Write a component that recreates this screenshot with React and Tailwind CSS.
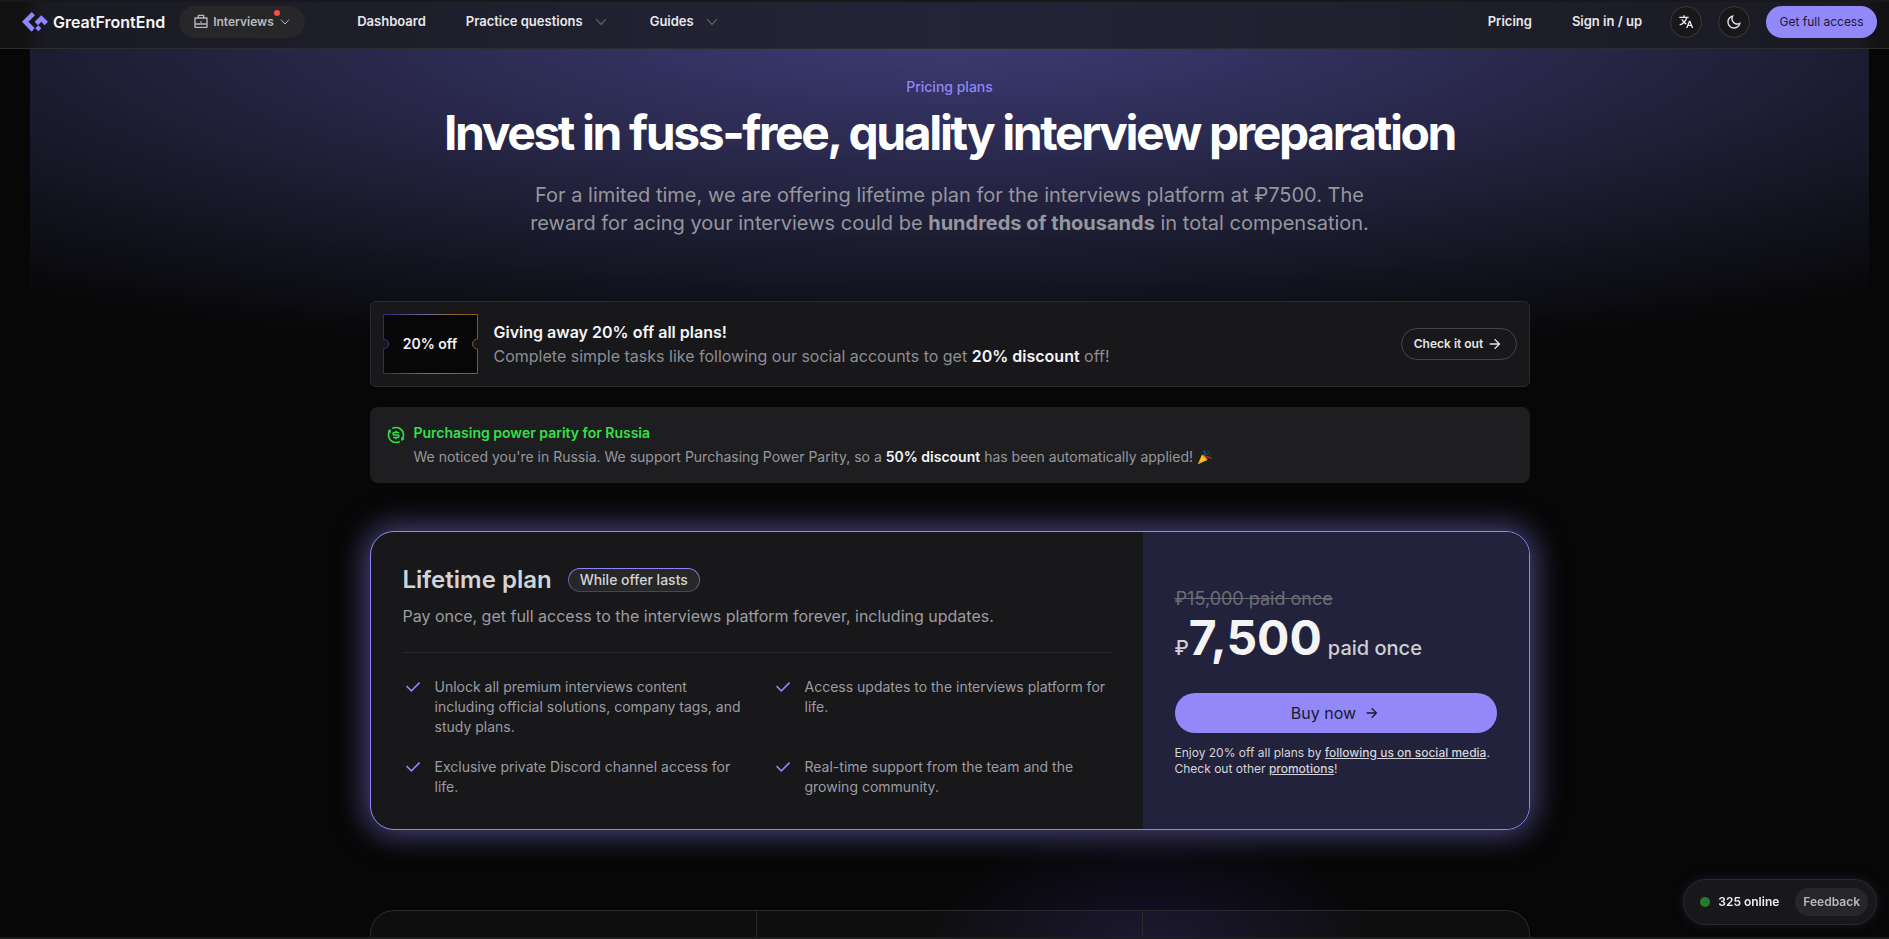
import React from "react";
import {
  RiArrowRightLine,
  RiBriefcaseLine,
  RiCheckLine,
  RiExchangeDollarLine,
  RiMoonLine,
  RiTranslate2,
} from "react-icons/ri";

function LogoMark() {
  return (
    <svg viewBox="0 0 78 60" className="h-5 w-[26px] shrink-0" fill="#8e86fa" aria-hidden="true">
      <path d="M29 0 L39 10 L19.500 29.500 L38 48 L29 59 L0 29.500 Z" />
      <path d="M58 10 L78 29.500 L68 39.500 L58 29.500 L48 39.500 L38 29.500 Z" />
      <path d="M49 40 L58 49 L49 58 L40 49 Z" />
    </svg>
  );
}

function Chevron({ className }) {
  return (
    <svg viewBox="0 0 12 12" className={className} fill="none" stroke="currentColor" strokeWidth="1.2" aria-hidden="true">
      <path d="M1.500 3.500 6 8.500 10.500 3.500" strokeLinecap="round" strokeLinejoin="round" />
    </svg>
  );
}

function PartyPopper() {
  return (
    <svg viewBox="0 0 16 16" className="inline-block size-4 align-[-3px]" role="img" aria-label="party popper">
      <path d="M1 15 5 5.500 10.500 11Z" fill="#fbbf24" />
      <path d="M1 15 2.500 11.500 4.800 13.400Z" fill="#f59e0b" />
      <path d="M5 5.500C7 5.500 10.500 9 10.500 11" fill="#d97706" />
      <path d="M7 6.500C8.500 5 8 3 6.500 1.500" stroke="#1d4f86" strokeWidth="1.500" fill="none" />
      <path d="M9 8C10.500 7.500 12.500 8 14.500 9.500" stroke="#8f2f26" strokeWidth="1.700" fill="none" />
      <path d="M8.500 7C9.500 5.500 11 4.500 12.500 3" stroke="#0b4a5c" strokeWidth="1.200" fill="none" />
      <circle cx="3.500" cy="3.500" r=".8" fill="#14391f" />
      <circle cx="10.500" cy="2" r=".8" fill="#14532d" />
      <circle cx="13.500" cy="6" r=".8" fill="#5c2412" />
    </svg>
  );
}

function Ticket() {
  return (
    <div className="grid h-[60px] w-[95px] shrink-0 place-items-center">
      <svg viewBox="0 0 95 60" className="col-start-1 row-start-1 h-[60px] w-[95px]" aria-hidden="true">
        <defs>
          <linearGradient id="ticket" x1="0" x2="1" y1="0" y2="0">
            <stop offset="0" stopColor="#2c2982" />
            <stop offset=".5" stopColor="#7a6f90" />
            <stop offset=".8" stopColor="#8d601d" />
            <stop offset="1" stopColor="#8a5a0c" />
          </linearGradient>
        </defs>
        <path
          d="M.5 .5H94.500V25A5 5 0 0 0 94.500 35V59.500H.5V35A5 5 0 0 0 .5 25Z"
          fill="#070708"
          stroke="url(#ticket)"
        />
      </svg>
      <span className="col-start-1 row-start-1 text-sm font-semibold text-[#f4f4f5]">20% off</span>
    </div>
  );
}

const features = [
  "Unlock all premium interviews content including official solutions, company tags, and study plans.",
  "Access updates to the interviews platform for life.",
  "Exclusive private Discord channel access for life.",
  "Real-time support from the team and the growing community.",
];

function Header() {
  return (
    <header className="flex h-[49px] items-center border-t-2 border-b border-t-[#18181a] border-b-[#2d2d2f] bg-[linear-gradient(90deg,#111112_0,#111112_20px,#1a1a23_45px,#242437_50%,#1a1a23_calc(100%-35px),#111112_calc(100%-8px))] pr-3 pb-1.5 pl-[22px] text-[13px] font-semibold text-[#e8e8ea]">
      <a href="#" className="flex items-center gap-[5px] text-base leading-5 text-[#f8f8f8]">
        <LogoMark />
        <span>GreatFrontEnd</span>
      </a>
      <button type="button" className="ml-3.5 flex h-8 w-[126px] items-center rounded-full bg-[#27272a] pl-3.5 text-xs font-semibold text-[#b9b9bd]">
        <RiBriefcaseLine className="size-4" />
        <span className="relative ml-1">
          Interviews
          <span className="absolute -top-1 -right-1.5 size-1.5 rounded-full bg-[#fb4b4b]" />
        </span>
        <Chevron className="ml-1.5 size-2.5" />
      </button>
      <nav className="ml-[52px] flex grow items-center">
        <a href="#">Dashboard</a>
        <button type="button" className="ml-10 flex items-center gap-3">
          Practice questions
          <Chevron className="size-3 text-[#5c5c63]" />
        </button>
        <button type="button" className="ml-[43px] flex items-center gap-3">
          Guides
          <Chevron className="size-3 text-[#5c5c63]" />
        </button>
        <a href="#" className="ml-auto">Pricing</a>
        <a href="#" className="ml-10">Sign in / up</a>
      </nav>
      <div className="ml-7 flex items-center gap-4">
        <button type="button" aria-label="Language" className="grid size-8 place-items-center rounded-full border border-[#39393d] bg-[#18181a]">
          <RiTranslate2 className="size-4" />
        </button>
        <button type="button" aria-label="Theme" className="grid size-8 place-items-center rounded-full border border-[#39393d] bg-[#18181a]">
          <RiMoonLine className="size-4" />
        </button>
        <button type="button" className="h-8 w-[111px] rounded-full bg-[#9288fa] text-xs font-normal text-[#1b1936]">
          Get full access
        </button>
      </div>
    </header>
  );
}

function PlanCard() {
  return (
    <section className="mt-12 flex overflow-hidden rounded-3xl border border-[#8f86fa] bg-[#18181a] shadow-[0_0_30px_4px_rgba(143,134,250,0.5)]">
      <div className="grow p-8">
        <div className="flex h-8 items-center gap-4">
          <h2 className="text-2xl font-semibold text-[#d4d4d7]">Lifetime plan</h2>
          <span className="rounded-full bg-linear-to-b from-[#8f86fa] to-[#46464b] p-px">
            <span className="flex h-[22px] items-center rounded-full bg-[#27272a] px-[11px] text-sm font-medium text-[#d4d4d7]">
              While offer lasts
            </span>
          </span>
        </div>
        <p className="mt-2 text-base text-[#9c9ca2]">
          Pay once, get full access to the interviews platform forever, including updates.
        </p>
        <hr className="mt-6 border-[#29292c]" />
        <ul className="mt-6 grid grid-cols-2 gap-x-8 gap-y-5 text-sm text-[#9c9ca2]">
          {features.map((f) => (
            <li key={f} className="flex gap-3">
              <RiCheckLine className="size-5 shrink-0 text-[#8f86fa]" />
              <span>{f}</span>
            </li>
          ))}
        </ul>
      </div>
      <div className="flex w-1/3 shrink-0 flex-col justify-center bg-[#22223d] px-8">
        <p className="text-lg leading-7 text-[#6d6d75] line-through">₽15,000 paid once</p>
        <p className="flex items-baseline text-xl leading-[49px] font-medium text-[#cfcfd4]">
          ₽<span className="mr-1.5 text-5xl leading-[49px] font-bold text-[#f4f4f5]">7,500</span>
          paid once
        </p>
        <button type="button" className="mt-5 flex h-10 items-center justify-center gap-2 rounded-full bg-[#9288fa] text-base text-[#19182c]">
          Buy now
          <RiArrowRightLine className="size-4" />
        </button>
        <p className="mt-3 text-xs text-[#d4d4d7]">
          Enjoy 20% off all plans by{" "}
          <a href="#" className="font-medium underline">following us on social media</a>.
          <br />
          Check out other <a href="#" className="font-medium underline">promotions</a>!
        </p>
      </div>
    </section>
  );
}

export default function App() {
  return (
    <div className="flex min-h-screen flex-col bg-[#070707] font-['Inter','Noto_Sans',sans-serif]">
      <Header />
      <div className="flex grow flex-col bg-[radial-gradient(230px_110px_at_1150px_100%,#15112a,transparent)] pl-2.5">
        <div className="flex grow flex-col bg-[radial-gradient(1500px_345px_at_50%_-20px,#3e3c76_0,#2d2c54_32%,#1c1c30_62%,#0f0f18_84%,transparent_100%)] [background-size:calc(100%-40px)_345px] bg-no-repeat [background-position:20px_0]">
          <main className="mx-auto flex w-full max-w-[1160px] grow flex-col">
            <div className="flex flex-col items-center pt-7 text-center">
              <p className="text-sm font-medium text-[#8f86fa]">Pricing plans</p>
              <h1 className="mt-3 text-5xl leading-[48px] font-bold tracking-tighter text-white">
                Invest in fuss-free, quality interview preparation
              </h1>
              <p className="mt-6 max-w-[840px] text-xl leading-7 text-[#96969f]">
                For a limited time, we are offering lifetime plan for the interviews platform at ₽7500. The reward for
                acing your interviews could be <strong className="font-bold">hundreds of thousands</strong> in total
                compensation.
              </p>
            </div>

            <section className="mt-16 flex items-center rounded-md border border-[#2a2a2d] bg-[#18181a] px-3 py-3">
              <Ticket />
              <div className="ml-4 grow text-base text-[#8d8d95]">
                <h2 className="font-semibold text-[#f4f4f5]">Giving away 20% off all plans!</h2>
                <p>
                  Complete simple tasks like following our social accounts to get{" "}
                  <strong className="font-semibold text-[#f4f4f5]">20% discount</strong> off!
                </p>
              </div>
              <button type="button" className="flex h-8 w-[116px] items-center justify-center gap-1 rounded-full border border-[#464649] text-xs font-semibold text-[#e4e4e6]">
                Check it out
                <RiArrowRightLine className="size-4" />
              </button>
            </section>

            <section className="mt-5 flex gap-2 rounded-lg bg-[#1e1e20] p-4 text-sm text-[#97979e]">
              <RiExchangeDollarLine className="mt-0.5 size-5 shrink-0 text-[#33e047]" />
              <div>
                <h2 className="font-semibold text-[#33e047]">Purchasing power parity for Russia</h2>
                <p className="mt-1">
                  We noticed you're in Russia. We support Purchasing Power Parity, so a{" "}
                  <strong className="font-semibold text-[#f4f4f5]">50% discount</strong> has been automatically
                  applied! <PartyPopper />
                </p>
              </div>
            </section>

            <PlanCard />

            <section className="mt-20 grid min-h-7 grow grid-cols-3 divide-x divide-[#29292b] rounded-t-3xl border border-b-0 border-[#29292b] bg-white/3">
              <div />
              <div />
              <div />
            </section>
          </main>
        </div>
      </div>
      <div className="fixed inset-x-0 bottom-0 h-0.5 bg-[#1d1d1e]" />
      <aside className="fixed right-3 bottom-3.5 flex h-[46px] items-center rounded-full border border-[#2a2a2e] bg-[#18181a] pr-2 pl-4 shadow-[0_0_12px_rgba(143,134,250,0.15)]">
        <span className="size-2.5 rounded-full bg-[#257a2d]" />
        <span className="ml-2 text-xs font-semibold text-[#eeeef0]">325 online</span>
        <button type="button" className="ml-4 h-7 rounded-full bg-[#27272a] px-2 text-xs font-semibold text-[#b9b9bd]">
          Feedback
        </button>
      </aside>
    </div>
  );
}
